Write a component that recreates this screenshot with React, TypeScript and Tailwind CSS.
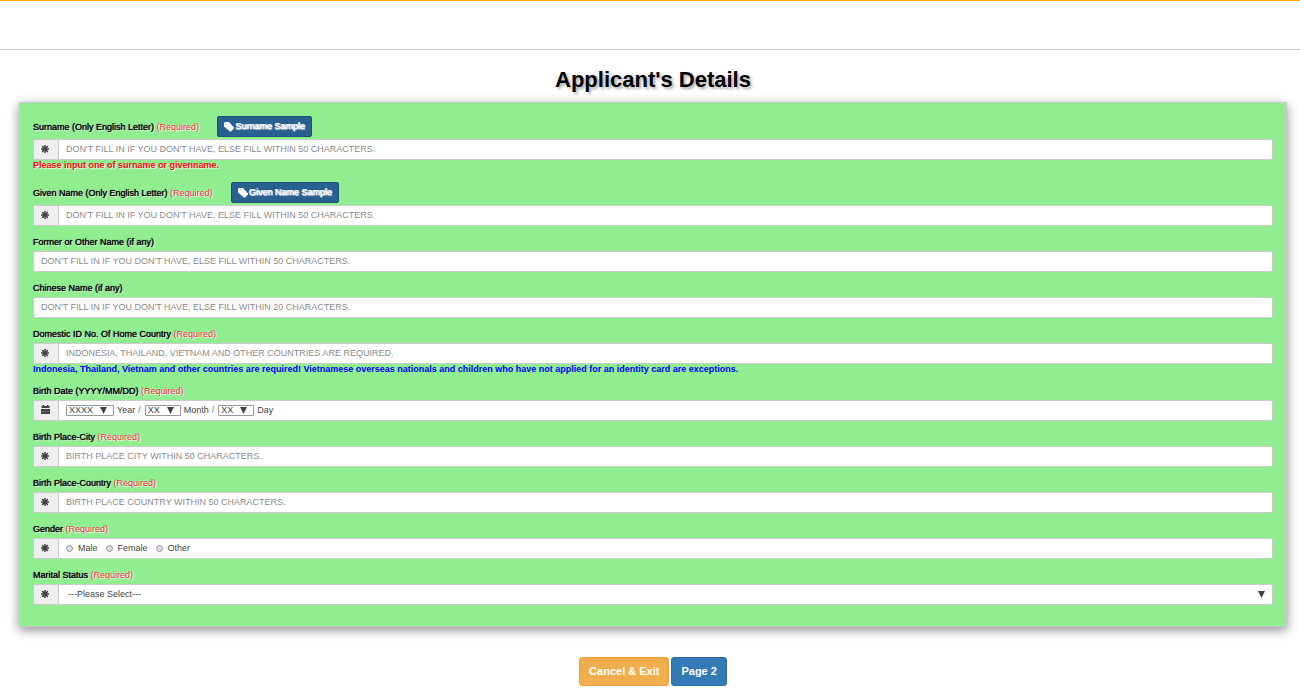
import type { ReactNode } from 'react';

// Icons
function AsteriskIcon() {
  return (
    <svg className="h-2 w-2" viewBox="0 0 16 16" stroke="currentColor" strokeWidth={3} aria-hidden="true">
      <path d="M8 0v16M0 8h16M2.3 2.3l11.4 11.4M13.7 2.3L2.3 13.7" />
    </svg>
  );
}

function CalendarIcon() {
  return (
    <svg className="h-[9px] w-[9px]" viewBox="0 0 18 18" fill="currentColor" aria-hidden="true">
      <path d="M1 2h2V0h3v2h6V0h3v2h2v4H1zM0 8h18v10H0z" />
      <path d="M3 12h2v2H3zM8 12h2v2H8zM13 12h2v2h-2z" fill="#888" />
    </svg>
  );
}

function TagIcon() {
  return (
    <svg className="h-[10px] w-[10px]" viewBox="0 0 20 20" fill="currentColor" aria-hidden="true">
      <path
        fillRule="evenodd"
        d="M0 2L2 0h8l10 11v2l-6 6h-2L0 9zM4 3a1 1 0 1 0 0 2 1 1 0 0 0 0-2z"
      />
    </svg>
  );
}

function Caret({ className }: { className: string }) {
  return (
    <svg className={`pointer-events-none absolute h-[7px] w-[7px] ${className}`} viewBox="0 0 7 7" fill="#444" aria-hidden="true">
      <path d="M0 0h7L3.5 7z" />
    </svg>
  );
}

// Label line above a control
function FieldLabel({ id, text, required }: { id: string; text: string; required?: boolean }) {
  return (
    <label
      htmlFor={id}
      className="block text-[9px] leading-[10px] text-black [text-shadow:0_0_1px_currentColor,1px_1px_1px_#fff]"
    >
      {text}
      {required && (
        <span className="text-[#e02b2b] [text-shadow:0_0_1px_#fff,1px_1px_1px_#fff]"> (Required)</span>
      )}
    </label>
  );
}

// White box with an optional grey addon on the left
function InputGroup({ icon, children }: { icon?: ReactNode; children: ReactNode }) {
  return (
    <div className="flex h-[21px] rounded-[2px] border border-[#ccc] bg-white text-[#555]">
      {icon && (
        <span className="flex w-[25px] shrink-0 items-center justify-center border-r border-[#ccc] bg-[#eee] pr-0.5 pb-0.5 text-[#444]">
          {icon}
        </span>
      )}
      {children}
    </div>
  );
}

type FieldProps = {
  id: string;
  label: string;
  required?: boolean;
  children: ReactNode;
};

function Field({ id, label, required, children }: FieldProps) {
  return (
    <div>
      <div className="mb-1">
        <FieldLabel id={id} text={label} required={required} />
      </div>
      {children}
    </div>
  );
}

function TextInput({ id, placeholder, required }: { id: string; placeholder: string; required?: boolean }) {
  return (
    <InputGroup icon={required ? <AsteriskIcon /> : undefined}>
      <input
        id={id}
        type="text"
        placeholder={placeholder}
        className="min-w-0 flex-1 px-[7px] text-[9px] leading-[19px] outline-none placeholder:text-[#8c8c8c]"
      />
    </InputGroup>
  );
}

function SampleRow({ id, label, sample }: { id: string; label: string; sample: string }) {
  return (
    <div className="mb-[2px] flex h-[21px] items-center gap-[18px]">
      <FieldLabel id={id} text={label} required />
      <button
        type="button"
        className="flex h-[21px] items-center gap-px rounded-[2px] border border-[#204d74] bg-[#286090] px-1.5 text-[9px] text-white [text-shadow:1px_0_0_#fff,1px_1px_1px_#fff]"
      >
        <TagIcon />
        {sample}
      </button>
    </div>
  );
}

function DateSelect({ id, value, unit, wide }: { id: string; value: string; unit: string; wide?: boolean }) {
  return (
    <>
      <span className="relative flex">
        <select
          id={id}
          className={`h-[11px] appearance-none rounded-[1px] border border-[#999] bg-white pl-[2px] text-[9px] leading-[9px] outline-none ${wide ? 'w-12' : 'w-9'}`}
        >
          <option>{value}</option>
        </select>
        <Caret className="top-[2px] right-[7px]" />
      </span>
      <label htmlFor={id} className="ml-[3px]">
        {unit}
      </label>
    </>
  );
}

function BirthDateField() {
  return (
    <Field id="birth-year" label="Birth Date (YYYY/MM/DD)" required>
      <InputGroup icon={<CalendarIcon />}>
        <div className="flex items-center px-[7px] text-[9px] text-[#444]">
          <DateSelect id="birth-year" value="XXXX" unit="Year" wide />
          <span className="mr-1 ml-[3px] text-[#777]">/</span>
          <DateSelect id="birth-month" value="XX" unit="Month" />
          <span className="mr-1 ml-[3px] text-[#777]">/</span>
          <DateSelect id="birth-day" value="XX" unit="Day" />
        </div>
      </InputGroup>
    </Field>
  );
}

function GenderField() {
  return (
    <Field id="gender-male" label="Gender" required>
      <InputGroup icon={<AsteriskIcon />}>
        <div className="flex items-center gap-2 px-[7px] text-[9px] text-[#444]">
          {['Male', 'Female', 'Other'].map((name) => (
            <label key={name} className="flex items-center gap-[5px]">
              <input
                id={`gender-${name.toLowerCase()}`}
                type="radio"
                name="gender"
                className="h-[7px] w-[7px] appearance-none rounded-full border border-[#999] bg-[#ddd] checked:bg-[#555]"
              />
              {name}
            </label>
          ))}
        </div>
      </InputGroup>
    </Field>
  );
}

function MaritalStatusField() {
  return (
    <Field id="marital-status" label="Marital Status" required>
      <InputGroup icon={<AsteriskIcon />}>
        <div className="relative flex flex-1">
          <select
            id="marital-status"
            className="w-full appearance-none bg-transparent px-[9px] text-[9px] text-[#444] outline-none"
          >
            <option>---Please Select---</option>
          </select>
          <Caret className="top-[6px] right-[7px]" />
        </div>
      </InputGroup>
    </Field>
  );
}

export default function App() {
  const fifty = "DON'T FILL IN IF YOU DON'T HAVE, ELSE FILL WITHIN 50 CHARACTERS.";
  const twenty = "DON'T FILL IN IF YOU DON'T HAVE, ELSE FILL WITHIN 20 CHARACTERS.";

  return (
    <div className="bg-white font-['Liberation_Sans',Arial,sans-serif]">
      <header className="h-[50px] border-t border-b border-t-[#ffa500] border-b-[#ccc]" />

      <main className="pr-[13px] pl-[19px]">
        <h1 className="pt-4 pb-2 text-center text-[22px] leading-7 font-bold text-black [text-shadow:2px_2px_3px_#aaa]">
          Applicant's Details
        </h1>

        <form>
          <div className="flex flex-col gap-[11px] border border-[#ccc] bg-[#90ee90] px-[13px] pt-[13px] pb-[21px] shadow-[0_3px_10px_rgba(0,0,0,0.45)]">
            <div>
              <SampleRow id="surname" label="Surname (Only English Letter)" sample="Surname Sample" />
              <TextInput id="surname" placeholder={fifty} required />
              <p className="text-[9px] leading-[11px] font-bold text-[#f00] [text-shadow:1px_1px_1px_#fff]">
                Please input one of surname or givenname.
              </p>
            </div>
            <div>
              <SampleRow id="given-name" label="Given Name (Only English Letter)" sample="Given Name Sample" />
              <TextInput id="given-name" placeholder={fifty} required />
            </div>
            <Field id="former-name" label="Former or Other Name (if any)">
              <TextInput id="former-name" placeholder={fifty} />
            </Field>
            <Field id="chinese-name" label="Chinese Name (if any)">
              <TextInput id="chinese-name" placeholder={twenty} />
            </Field>
            <Field id="domestic-id" label="Domestic ID No. Of Home Country" required>
              <TextInput
                id="domestic-id"
                placeholder="INDONESIA, THAILAND, VIETNAM AND OTHER COUNTRIES ARE REQUIRED."
                required
              />
              <p className="text-[9px] leading-[11px] font-bold text-[#00f]">
                Indonesia, Thailand, Vietnam and other countries are required! Vietnamese overseas nationals and
                children who have not applied for an identity card are exceptions.
              </p>
            </Field>
            <BirthDateField />
            <Field id="birth-city" label="Birth Place-City" required>
              <TextInput id="birth-city" placeholder="BIRTH PLACE CITY WITHIN 50 CHARACTERS." required />
            </Field>
            <Field id="birth-country" label="Birth Place-Country" required>
              <TextInput id="birth-country" placeholder="BIRTH PLACE COUNTRY WITHIN 50 CHARACTERS." required />
            </Field>
            <GenderField />
            <MaritalStatusField />
          </div>

          <div className="mt-[30px] flex justify-center gap-0.5">
            <button
              type="button"
              className="h-[29px] rounded-[3px] border border-[#eea236] bg-[#f0ad4e] px-[9px] text-[11px] font-bold text-white"
            >
              Cancel &amp; Exit
            </button>
            <button
              type="submit"
              className="h-[29px] rounded-[3px] border border-[#2e6da4] bg-[#337ab7] px-[9px] text-[11px] font-bold text-white"
            >
              Page 2
            </button>
          </div>
        </form>
      </main>
    </div>
  );
}
